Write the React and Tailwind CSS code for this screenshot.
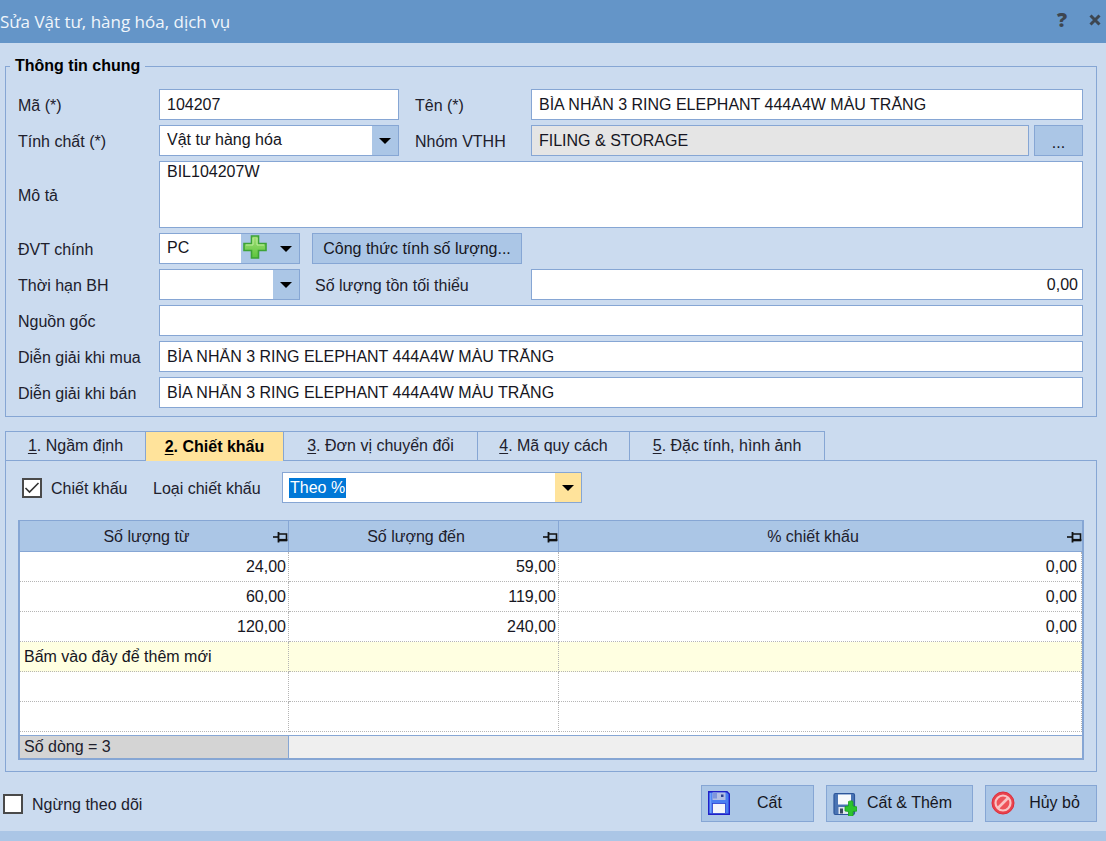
import React, { useState } from 'react';

const FIELD = 'h-[31px] w-full min-w-0 border border-[#86a6d4] bg-white px-[7px] text-[#161622] outline-none';
const BUTTON = 'border border-[#86a6d4] bg-[#abc6e6] text-[#161622]';

function Arrow({ tone = 'bg-[#abc6e6]' }) {
  return (
    <span className={`pointer-events-none flex w-[26px] shrink-0 items-center justify-center ${tone}`}>
      <svg width="12" height="6" viewBox="0 0 12 6" aria-hidden="true">
        <path d="M0 0h12L6 6z" fill="#000" />
      </svg>
    </span>
  );
}

function Combo({ id, options, className, children }) {
  return (
    <div className={`flex h-[31px] border border-[#86a6d4] bg-white ${className}`}>
      <select id={id} className="min-w-0 flex-1 appearance-none bg-white pb-0.5 pl-[7px] text-[#161622] outline-none">
        {options.map((o) => (
          <option key={o}>{o}</option>
        ))}
      </select>
      {children}
      <Arrow />
    </div>
  );
}

function Label({ htmlFor, className = '', children }) {
  return (
    <label htmlFor={htmlFor} className={`shrink-0 whitespace-nowrap pt-0.5 ${className}`}>
      {children}
    </label>
  );
}

function Row({ id, label, children }) {
  return (
    <div className="flex items-center">
      <Label htmlFor={id} className="w-[141px]">{label}</Label>
      {children}
    </div>
  );
}

function PlusIcon() {
  return (
    <svg width="24" height="24" viewBox="0 0 24 24" aria-hidden="true">
      <defs>
        <linearGradient id="plusFill" x1="0" y1="0" x2="0" y2="1">
          <stop offset="0" stopColor="#a5e07a" />
          <stop offset="1" stopColor="#5cc43c" />
        </linearGradient>
      </defs>
      <path d="M8.500 1h7v7.500H23v7h-7.500V23h-7v-7.500H1v-7h7.500z" fill="url(#plusFill)" stroke="#3da336" strokeWidth="1.600" />
      <path d="M10 3v7H3M14 3v7h7" fill="none" stroke="#bdec9c" strokeWidth="1" />
    </svg>
  );
}

function PinIcon() {
  return (
    <svg width="15" height="11" viewBox="0 0 15 11" className="shrink-0" aria-hidden="true">
      <path d="M0 5h5" stroke="#111" strokeWidth="1.600" />
      <path d="M5.500 0v10.500" stroke="#111" strokeWidth="1.800" />
      <path d="M6 2h7.500v6.500H6" fill="none" stroke="#111" strokeWidth="1.600" />
      <path d="M6 8h8.300" stroke="#111" strokeWidth="2.200" />
    </svg>
  );
}

function SaveIcon() {
  return (
    <svg width="22" height="24" viewBox="0 0 22 24" aria-hidden="true">
      <path d="M.7.7h18.300l2.300 2.300v20.300H.7z" fill="#4a7ff2" stroke="#2020c8" strokeWidth="1.400" />
      <path d="M2.500 2v20" stroke="#6fa2ff" strokeWidth="1.500" />
      <rect x="4.500" y="1.500" width="13" height="7.500" fill="#b4bfe4" />
      <rect x="5" y="1.500" width="4" height="6" fill="#7f95dc" />
      <rect x="13" y="3.500" width="2.500" height="2.500" fill="#2a3f90" />
      <rect x="4.500" y="12.500" width="13" height="10" fill="#f4f6fb" stroke="#2a3fd0" strokeWidth=".8" />
    </svg>
  );
}

function SaveAddIcon() {
  return (
    <svg width="24" height="24" viewBox="0 0 24 24" aria-hidden="true">
      <rect x="1" y="1.500" width="20.500" height="21" rx="1.500" fill="#4a74b4" stroke="#2c559a" strokeWidth="1.200" />
      <rect x="5" y="2.500" width="13" height="10" fill="#f7f9fc" />
      <rect x="5.500" y="15" width="10" height="7" fill="#dfe6ee" />
      <rect x="7" y="16.500" width="3" height="5" fill="#3b4a60" />
      <path d="M15.500 9.500c2-.8 3.500-.8 4.500 0V14l4 1v4l-4 .5V24l-4.500.5v-5l-3.500-.5v-4.500l3.500-.5z" fill="#2cc42c" stroke="#1b9f1b" strokeWidth=".8" />
    </svg>
  );
}

function CancelIcon() {
  return (
    <svg width="24" height="24" viewBox="0 0 24 24" aria-hidden="true">
      <circle cx="12" cy="12" r="11" fill="#e9424c" stroke="#dc2f3c" strokeWidth="1" />
      <circle cx="12" cy="12" r="7.500" fill="#ee5258" stroke="#f9c4c4" strokeWidth="2.200" />
      <path d="M7 17L17 7" stroke="#f9c4c4" strokeWidth="2.600" />
    </svg>
  );
}

function Check({ id, checked, onChange }) {
  return (
    <span className="grid shrink-0">
      <input
        id={id}
        type="checkbox"
        checked={checked}
        onChange={onChange}
        className="size-5 appearance-none border-2 border-[#4a4a4a] bg-white [grid-area:1/1]"
      />
      {checked && (
        <svg viewBox="0 0 20 20" className="pointer-events-none size-5 [grid-area:1/1]" aria-hidden="true">
          <path d="M3.500 10l4 4L16.500 5" fill="none" stroke="#333" strokeWidth="1.600" />
        </svg>
      )}
    </span>
  );
}

const TABS = [
  { text: 'Ngầm định', width: 'w-[140px]' },
  { text: 'Chiết khấu', width: 'w-[138px]' },
  { text: 'Đơn vị chuyển đổi', width: 'w-[194px]' },
  { text: 'Mã quy cách', width: 'w-[152px]' },
  { text: 'Đặc tính, hình ảnh', width: 'w-[196px]' },
];

const ROWS = [
  ['24,00', '59,00', '0,00'],
  ['60,00', '119,00', '0,00'],
  ['120,00', '240,00', '0,00'],
];

const CELL = 'h-[30px] border-b border-r border-dotted border-[#b5b5b5] p-0 pr-0.5 last:pr-1';

export default function App() {
  const [tab, setTab] = useState(1);
  const [discount, setDiscount] = useState(true);
  const [stopped, setStopped] = useState(false);
  const item = 'BÌA NHẪN 3 RING ELEPHANT 444A4W MÀU TRẮNG';

  return (
    <div className="flex min-h-screen flex-col bg-[#cbdbef] font-['Liberation_Sans',Arial,sans-serif] text-[16px] leading-5 text-[#20202c]">
      <header className="flex h-[43px] items-center justify-between bg-[#6495c8] pr-0.5">
        <h1 className="font-['Open_Sans','Noto_Sans',sans-serif] text-[17px] text-[#f0f5fb]">Sửa Vật tư, hàng hóa, dịch vụ</h1>
        <div className="flex items-center gap-3 pb-1">
          <button type="button" aria-label="Trợ giúp" className="w-6 font-['Open_Sans',sans-serif] text-[20px] font-extrabold text-[#3d4650]">?</button>
          <button type="button" aria-label="Đóng" className="flex w-[18px] justify-center">
            <svg width="12" height="12" viewBox="0 0 12 12" aria-hidden="true">
              <path d="M1.500 1.500l9 9M10.500 1.500l-9 9" stroke="#3d4650" strokeWidth="3" />
            </svg>
          </button>
        </div>
      </header>

      <main className="flex flex-1 flex-col pt-[11px]">
        <fieldset className="ml-[5px] mr-[9px] min-w-0 border border-[#86a6d4] pb-2 pl-3 pr-[13px]">
          <legend className="-ml-2 px-[5px] text-[16px] font-bold leading-6 text-black">Thông tin chung</legend>
          <div className="flex flex-col gap-[5px] pt-[11px]">
            <div className="flex items-center">
              <Label htmlFor="code" className="w-[141px]">Mã (*)</Label>
              <div className="w-60 shrink-0">
                <input id="code" className={FIELD} defaultValue="104207" />
              </div>
              <Label htmlFor="name" className="w-[132px] pl-4">Tên (*)</Label>
              <input id="name" className={FIELD} defaultValue={item} />
            </div>
            <div className="flex items-center">
              <Label htmlFor="kind" className="w-[141px]">Tính chất (*)</Label>
              <Combo id="kind" options={['Vật tư hàng hóa']} className="w-60 shrink-0" />
              <Label htmlFor="group" className="w-[132px] pl-4">Nhóm VTHH</Label>
              <input id="group" readOnly className="h-[31px] w-full min-w-0 border border-[#86a6d4] bg-[#e5e5e5] px-[7px] text-[#161622] outline-none" defaultValue="FILING & STORAGE" />
              <button type="button" aria-label="Chọn nhóm" className={`ml-[5px] h-[31px] w-[49px] shrink-0 pt-1 ${BUTTON}`}>...</button>
            </div>
            <Row id="desc" label="Mô tả">
              <textarea id="desc" className="block h-[67px] w-full min-w-0 resize-none border border-[#86a6d4] bg-white px-[7px] text-[#161622] outline-none" defaultValue="BIL104207W" />
            </Row>
            <Row id="unit" label="ĐVT chính">
              <Combo id="unit" options={['PC']} className="w-[141px] shrink-0">
                <button type="button" aria-label="Thêm đơn vị" className="flex w-8 shrink-0 items-start justify-start bg-[#abc6e6] pl-0.5 pt-px">
                  <PlusIcon />
                </button>
              </Combo>
              <button type="button" className={`ml-3 h-[31px] w-[210px] shrink-0 whitespace-nowrap ${BUTTON}`}>Công thức tính số lượng...</button>
            </Row>
            <Row id="warranty" label="Thời hạn BH">
              <Combo id="warranty" options={['']} className="w-[141px] shrink-0" />
              <Label htmlFor="minimum" className="w-[231px] pl-[15px]">Số lượng tồn tối thiểu</Label>
              <input id="minimum" className="h-[31px] w-full min-w-0 border border-[#86a6d4] bg-white px-1 text-right text-[#161622] outline-none" defaultValue="0,00" />
            </Row>
            <Row id="origin" label="Nguồn gốc">
              <input id="origin" className={FIELD} />
            </Row>
            <Row id="buy" label="Diễn giải khi mua">
              <input id="buy" className={FIELD} defaultValue={item} />
            </Row>
            <Row id="sell" label="Diễn giải khi bán">
              <input id="sell" className={FIELD} defaultValue={item} />
            </Row>
          </div>
        </fieldset>

        <section className="ml-[5px] mr-[9px] mt-[14px]">
          <div role="tablist" className="flex h-[29px]">
            {TABS.map((t, i) => (
              <button
                key={t.text}
                type="button"
                role="tab"
                aria-selected={tab === i}
                onClick={() => setTab(i)}
                className={`shrink-0 whitespace-nowrap border-l border-t border-[#86a6d4] last:border-r ${t.width} ${
                  tab === i ? 'z-10 h-[30px] bg-[#ffe39b] font-bold text-black' : 'h-[29px]'
                }`}
              >
                <span className="underline underline-offset-2">{i + 1}</span>. {t.text}
              </button>
            ))}
          </div>
          <div role="tabpanel" className="border border-[#86a6d4] px-3 pb-[11px] pt-[11px]">
            <div className="flex h-[31px] items-center">
              <div className="flex items-center gap-[9px] pl-1">
                <Check id="discount" checked={discount} onChange={() => setDiscount(!discount)} />
                <Label htmlFor="discount" className="w-[102px]">Chiết khấu</Label>
              </div>
              <Label htmlFor="discountKind" className="w-[129px]">Loại chiết khấu</Label>
              <div className="flex h-[31px] w-[300px] items-center border border-[#86a6d4] bg-white">
                <select id="discountKind" className="ml-1.5 h-5 appearance-none bg-[#0078d7] px-px leading-5 text-white outline-none [field-sizing:content]">
                  <option>Theo %</option>
                </select>
                <span className="ml-auto flex self-stretch">
                  <Arrow tone="bg-[#ffe39b]" />
                </span>
              </div>
            </div>

            <div className="mt-[17px] border-2 border-t border-[#86a6d4] bg-white">
              <table className="w-full table-fixed border-separate border-spacing-0">
                <colgroup>
                  <col className="w-[269px]" />
                  <col className="w-[270px]" />
                  <col />
                </colgroup>
                <thead>
                  <tr>
                    {['Số lượng từ', 'Số lượng đến', '% chiết khấu'].map((h) => (
                      <th key={h} scope="col" className="h-[31px] border-b border-r border-[#86a6d4] bg-[#abc6e6] p-0 font-normal last:border-r-0">
                        <div className="flex items-center pt-0.5">
                          <span className="flex-1 text-center">{h}</span>
                          <PinIcon />
                        </div>
                      </th>
                    ))}
                  </tr>
                </thead>
                <tbody className="text-right text-[#161622]">
                  {ROWS.map((r) => (
                    <tr key={r[0]}>
                      {r.map((v, i) => (
                        <td key={i} className={CELL}>{v}</td>
                      ))}
                    </tr>
                  ))}
                  <tr className="bg-[#ffffe1] text-left">
                    <td className={`${CELL} whitespace-nowrap`}><span className="pl-1">Bấm vào đây để thêm mới</span></td>
                    <td className={CELL} />
                    <td className={CELL} />
                  </tr>
                  {[0, 1].map((n) => (
                    <tr key={n}>
                      <td className={CELL} />
                      <td className={CELL} />
                      <td className={CELL} />
                    </tr>
                  ))}
                </tbody>
                <tfoot>
                  <tr>
                    <td colSpan={3} className="h-[3px] p-0" />
                  </tr>
                  <tr>
                    <td className="h-[23px] border-r border-t border-[#86a6d4] bg-[#d4d4d4] p-0 pl-1">Số dòng = 3</td>
                    <td colSpan={2} className="border-t border-[#86a6d4] bg-[#efefef] p-0" />
                  </tr>
                </tfoot>
              </table>
            </div>
          </div>
        </section>

        <footer className="mb-[9px] mt-[13px] flex items-center gap-3 pl-[3px] pr-[9px]">
          <div className="mr-auto flex items-center gap-[9px]">
            <Check id="stopped" checked={stopped} onChange={() => setStopped(!stopped)} />
            <Label htmlFor="stopped">Ngừng theo dõi</Label>
          </div>
          <button type="button" className={`flex h-[37px] w-[113px] items-center pb-0.5 pl-1.5 pr-6 ${BUTTON}`}>
            <SaveIcon />
            <span className="flex-1 pl-5 text-center">Cất</span>
          </button>
          <button type="button" className={`flex h-[37px] w-[147px] items-center pl-1.5 pr-2.5 ${BUTTON}`}>
            <SaveAddIcon />
            <span className="flex-1 whitespace-nowrap pb-0.5 text-center">Cất &amp; Thêm</span>
          </button>
          <button type="button" className={`flex h-[37px] w-28 items-center pb-0.5 pl-[5px] pr-2.5 ${BUTTON}`}>
            <CancelIcon />
            <span className="flex-1 whitespace-nowrap pl-2 text-center">Hủy bỏ</span>
          </button>
        </footer>
      </main>
      <div className="h-2.5 bg-[#abc6e6]" />
    </div>
  );
}
